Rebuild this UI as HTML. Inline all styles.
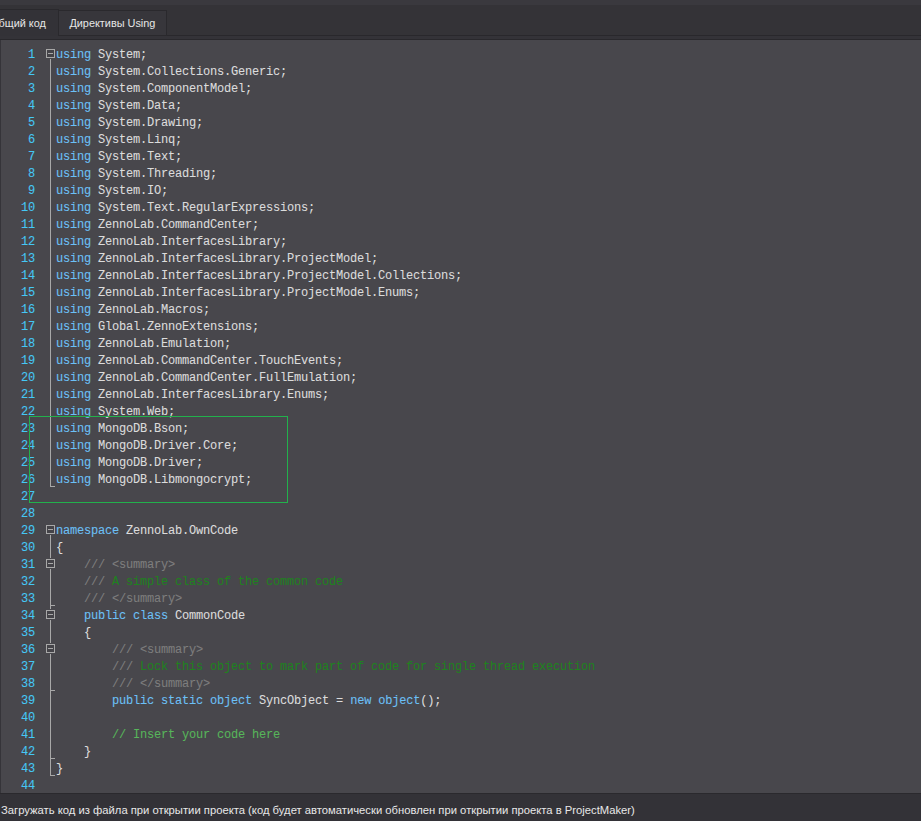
<!DOCTYPE html>
<html><head><meta charset="utf-8">
<style>
html,body{margin:0;padding:0;}
body{width:921px;height:821px;overflow:hidden;position:relative;background:#343338;font-family:"Liberation Sans",sans-serif;}
.topband{position:absolute;left:0;top:0;width:921px;height:5px;background:#3a393e;}
.tabbar{position:absolute;left:0;top:5px;width:921px;height:30px;background:#343337;}
.tab{position:absolute;box-sizing:border-box;border:1px solid #2a292d;background:#333236;color:#e6e6e6;font-size:10.9px;line-height:14px;}
.hl{position:absolute;height:1px;background:#29282c;}
.editor{position:absolute;left:0;top:40px;width:921px;height:753px;background:#48474c;}
.edleft{position:absolute;left:0;top:40px;width:1px;height:753px;background:#353439;}
.botline{position:absolute;left:0;top:793px;width:921px;height:1px;background:#2a292d;}
.status{position:absolute;left:0;top:794px;width:921px;height:27px;background:#333237;}
.stext{position:absolute;left:1px;top:803px;color:#e8e8e8;font-size:11.25px;line-height:14px;white-space:nowrap;}
.code{position:absolute;left:0;top:0;font-family:"Liberation Mono",monospace;font-size:12px;letter-spacing:-0.2px;-webkit-text-stroke:0.08px currentColor;white-space:pre;}
.ln{position:absolute;width:35px;left:0;text-align:right;color:#45c8f5;height:17px;line-height:17px;}
.tx{position:absolute;left:56px;color:#dcdcdc;height:17px;line-height:17px;}
.k{color:#6cc0f6;}
.c{color:#57b55a;}
.g{color:#7e7e7e;}
.d{color:#1f821f;}
.fl{position:absolute;background:#a8a8a8;}
.fb{position:absolute;box-sizing:border-box;width:9px;height:9px;border:1px solid #a8a8a8;background:#444348;}
.fb::after{content:"";position:absolute;left:1px;top:3px;width:5px;height:1px;background:#a8a8a8;}
.green{position:absolute;left:29px;top:416px;width:257px;height:85px;border:1px solid #22b14c;}
</style></head><body>
<div class="topband"></div>
<div class="tabbar"></div>
<div class="hl" style="left:58px;top:35px;width:863px;"></div>
<div class="hl" style="left:0;top:39px;width:921px;"></div>
<div class="tab" style="left:-30px;top:9px;width:89px;height:27px;border-bottom:none;background:#333237;"><span style="position:absolute;left:19px;top:6px;">Общий код</span></div>
<div class="tab" style="left:58px;top:10px;width:109px;height:26px;background:#37363b;"><span style="position:absolute;left:10.4px;top:5px;">Директивы Using</span></div>
<div class="editor"></div>
<div class="edleft"></div>
<div class="botline"></div>
<div class="status"></div>
<div class="stext">Загружать код из файла при открытии проекта (код будет автоматически обновлен при открытии проекта в ProjectMaker)</div>
<div class="code" id="code">
<div class="ln" style="top:47px">1</div><div class="tx" style="top:47px"><span class="k">using</span> System;</div>
<div class="ln" style="top:64px">2</div><div class="tx" style="top:64px"><span class="k">using</span> System.Collections.Generic;</div>
<div class="ln" style="top:81px">3</div><div class="tx" style="top:81px"><span class="k">using</span> System.ComponentModel;</div>
<div class="ln" style="top:98px">4</div><div class="tx" style="top:98px"><span class="k">using</span> System.Data;</div>
<div class="ln" style="top:115px">5</div><div class="tx" style="top:115px"><span class="k">using</span> System.Drawing;</div>
<div class="ln" style="top:132px">6</div><div class="tx" style="top:132px"><span class="k">using</span> System.Linq;</div>
<div class="ln" style="top:149px">7</div><div class="tx" style="top:149px"><span class="k">using</span> System.Text;</div>
<div class="ln" style="top:166px">8</div><div class="tx" style="top:166px"><span class="k">using</span> System.Threading;</div>
<div class="ln" style="top:183px">9</div><div class="tx" style="top:183px"><span class="k">using</span> System.IO;</div>
<div class="ln" style="top:200px">10</div><div class="tx" style="top:200px"><span class="k">using</span> System.Text.RegularExpressions;</div>
<div class="ln" style="top:217px">11</div><div class="tx" style="top:217px"><span class="k">using</span> ZennoLab.CommandCenter;</div>
<div class="ln" style="top:234px">12</div><div class="tx" style="top:234px"><span class="k">using</span> ZennoLab.InterfacesLibrary;</div>
<div class="ln" style="top:251px">13</div><div class="tx" style="top:251px"><span class="k">using</span> ZennoLab.InterfacesLibrary.ProjectModel;</div>
<div class="ln" style="top:268px">14</div><div class="tx" style="top:268px"><span class="k">using</span> ZennoLab.InterfacesLibrary.ProjectModel.Collections;</div>
<div class="ln" style="top:285px">15</div><div class="tx" style="top:285px"><span class="k">using</span> ZennoLab.InterfacesLibrary.ProjectModel.Enums;</div>
<div class="ln" style="top:302px">16</div><div class="tx" style="top:302px"><span class="k">using</span> ZennoLab.Macros;</div>
<div class="ln" style="top:319px">17</div><div class="tx" style="top:319px"><span class="k">using</span> Global.ZennoExtensions;</div>
<div class="ln" style="top:336px">18</div><div class="tx" style="top:336px"><span class="k">using</span> ZennoLab.Emulation;</div>
<div class="ln" style="top:353px">19</div><div class="tx" style="top:353px"><span class="k">using</span> ZennoLab.CommandCenter.TouchEvents;</div>
<div class="ln" style="top:370px">20</div><div class="tx" style="top:370px"><span class="k">using</span> ZennoLab.CommandCenter.FullEmulation;</div>
<div class="ln" style="top:387px">21</div><div class="tx" style="top:387px"><span class="k">using</span> ZennoLab.InterfacesLibrary.Enums;</div>
<div class="ln" style="top:404px">22</div><div class="tx" style="top:404px"><span class="k">using</span> System.Web;</div>
<div class="ln" style="top:421px">23</div><div class="tx" style="top:421px"><span class="k">using</span> MongoDB.Bson;</div>
<div class="ln" style="top:438px">24</div><div class="tx" style="top:438px"><span class="k">using</span> MongoDB.Driver.Core;</div>
<div class="ln" style="top:455px">25</div><div class="tx" style="top:455px"><span class="k">using</span> MongoDB.Driver;</div>
<div class="ln" style="top:472px">26</div><div class="tx" style="top:472px"><span class="k">using</span> MongoDB.Libmongocrypt;</div>
<div class="ln" style="top:489px">27</div><div class="tx" style="top:489px"></div>
<div class="ln" style="top:506px">28</div><div class="tx" style="top:506px"></div>
<div class="ln" style="top:523px">29</div><div class="tx" style="top:523px"><span class="k">namespace</span> ZennoLab.OwnCode</div>
<div class="ln" style="top:540px">30</div><div class="tx" style="top:540px">{</div>
<div class="ln" style="top:557px">31</div><div class="tx" style="top:557px">    <span class="g">/// &lt;summary&gt;</span></div>
<div class="ln" style="top:574px">32</div><div class="tx" style="top:574px">    <span class="g">///</span><span class="d"> A simple class of the common code</span></div>
<div class="ln" style="top:591px">33</div><div class="tx" style="top:591px">    <span class="g">/// &lt;/summary&gt;</span></div>
<div class="ln" style="top:608px">34</div><div class="tx" style="top:608px">    <span class="k">public</span> <span class="k">class</span> CommonCode</div>
<div class="ln" style="top:625px">35</div><div class="tx" style="top:625px">    {</div>
<div class="ln" style="top:642px">36</div><div class="tx" style="top:642px">        <span class="g">/// &lt;summary&gt;</span></div>
<div class="ln" style="top:659px">37</div><div class="tx" style="top:659px">        <span class="g">///</span><span class="d"> Lock this object to mark part of code for single thread execution</span></div>
<div class="ln" style="top:676px">38</div><div class="tx" style="top:676px">        <span class="g">/// &lt;/summary&gt;</span></div>
<div class="ln" style="top:693px">39</div><div class="tx" style="top:693px">        <span class="k">public</span> <span class="k">static</span> <span class="k">object</span> SyncObject = <span class="k">new</span> <span class="k">object</span>();</div>
<div class="ln" style="top:710px">40</div><div class="tx" style="top:710px"></div>
<div class="ln" style="top:727px">41</div><div class="tx" style="top:727px">        <span class="c">// Insert your code here</span></div>
<div class="ln" style="top:744px">42</div><div class="tx" style="top:744px">    }</div>
<div class="ln" style="top:761px">43</div><div class="tx" style="top:761px">}</div>
<div class="ln" style="top:778px">44</div><div class="tx" style="top:778px"></div>
<div class="fb" style="left:46px;top:49px"></div>
<div class="fl" style="left:50px;top:59px;width:1px;height:428px"></div>
<div class="fl" style="left:50px;top:486px;width:5px;height:1px"></div>
<div class="fb" style="left:46px;top:525px"></div>
<div class="fl" style="left:50px;top:535px;width:1px;height:23px"></div>
<div class="fb" style="left:46px;top:559px"></div>
<div class="fl" style="left:50px;top:569px;width:1px;height:40px"></div>
<div class="fl" style="left:50px;top:605px;width:5px;height:1px"></div>
<div class="fb" style="left:46px;top:610px"></div>
<div class="fl" style="left:50px;top:620px;width:1px;height:23px"></div>
<div class="fb" style="left:46px;top:644px"></div>
<div class="fl" style="left:50px;top:654px;width:1px;height:122px"></div>
<div class="fl" style="left:50px;top:690px;width:5px;height:1px"></div>
<div class="fl" style="left:50px;top:758px;width:5px;height:1px"></div>
<div class="fl" style="left:50px;top:775px;width:5px;height:1px"></div>
</div>
<div class="green"></div>
</body></html>
